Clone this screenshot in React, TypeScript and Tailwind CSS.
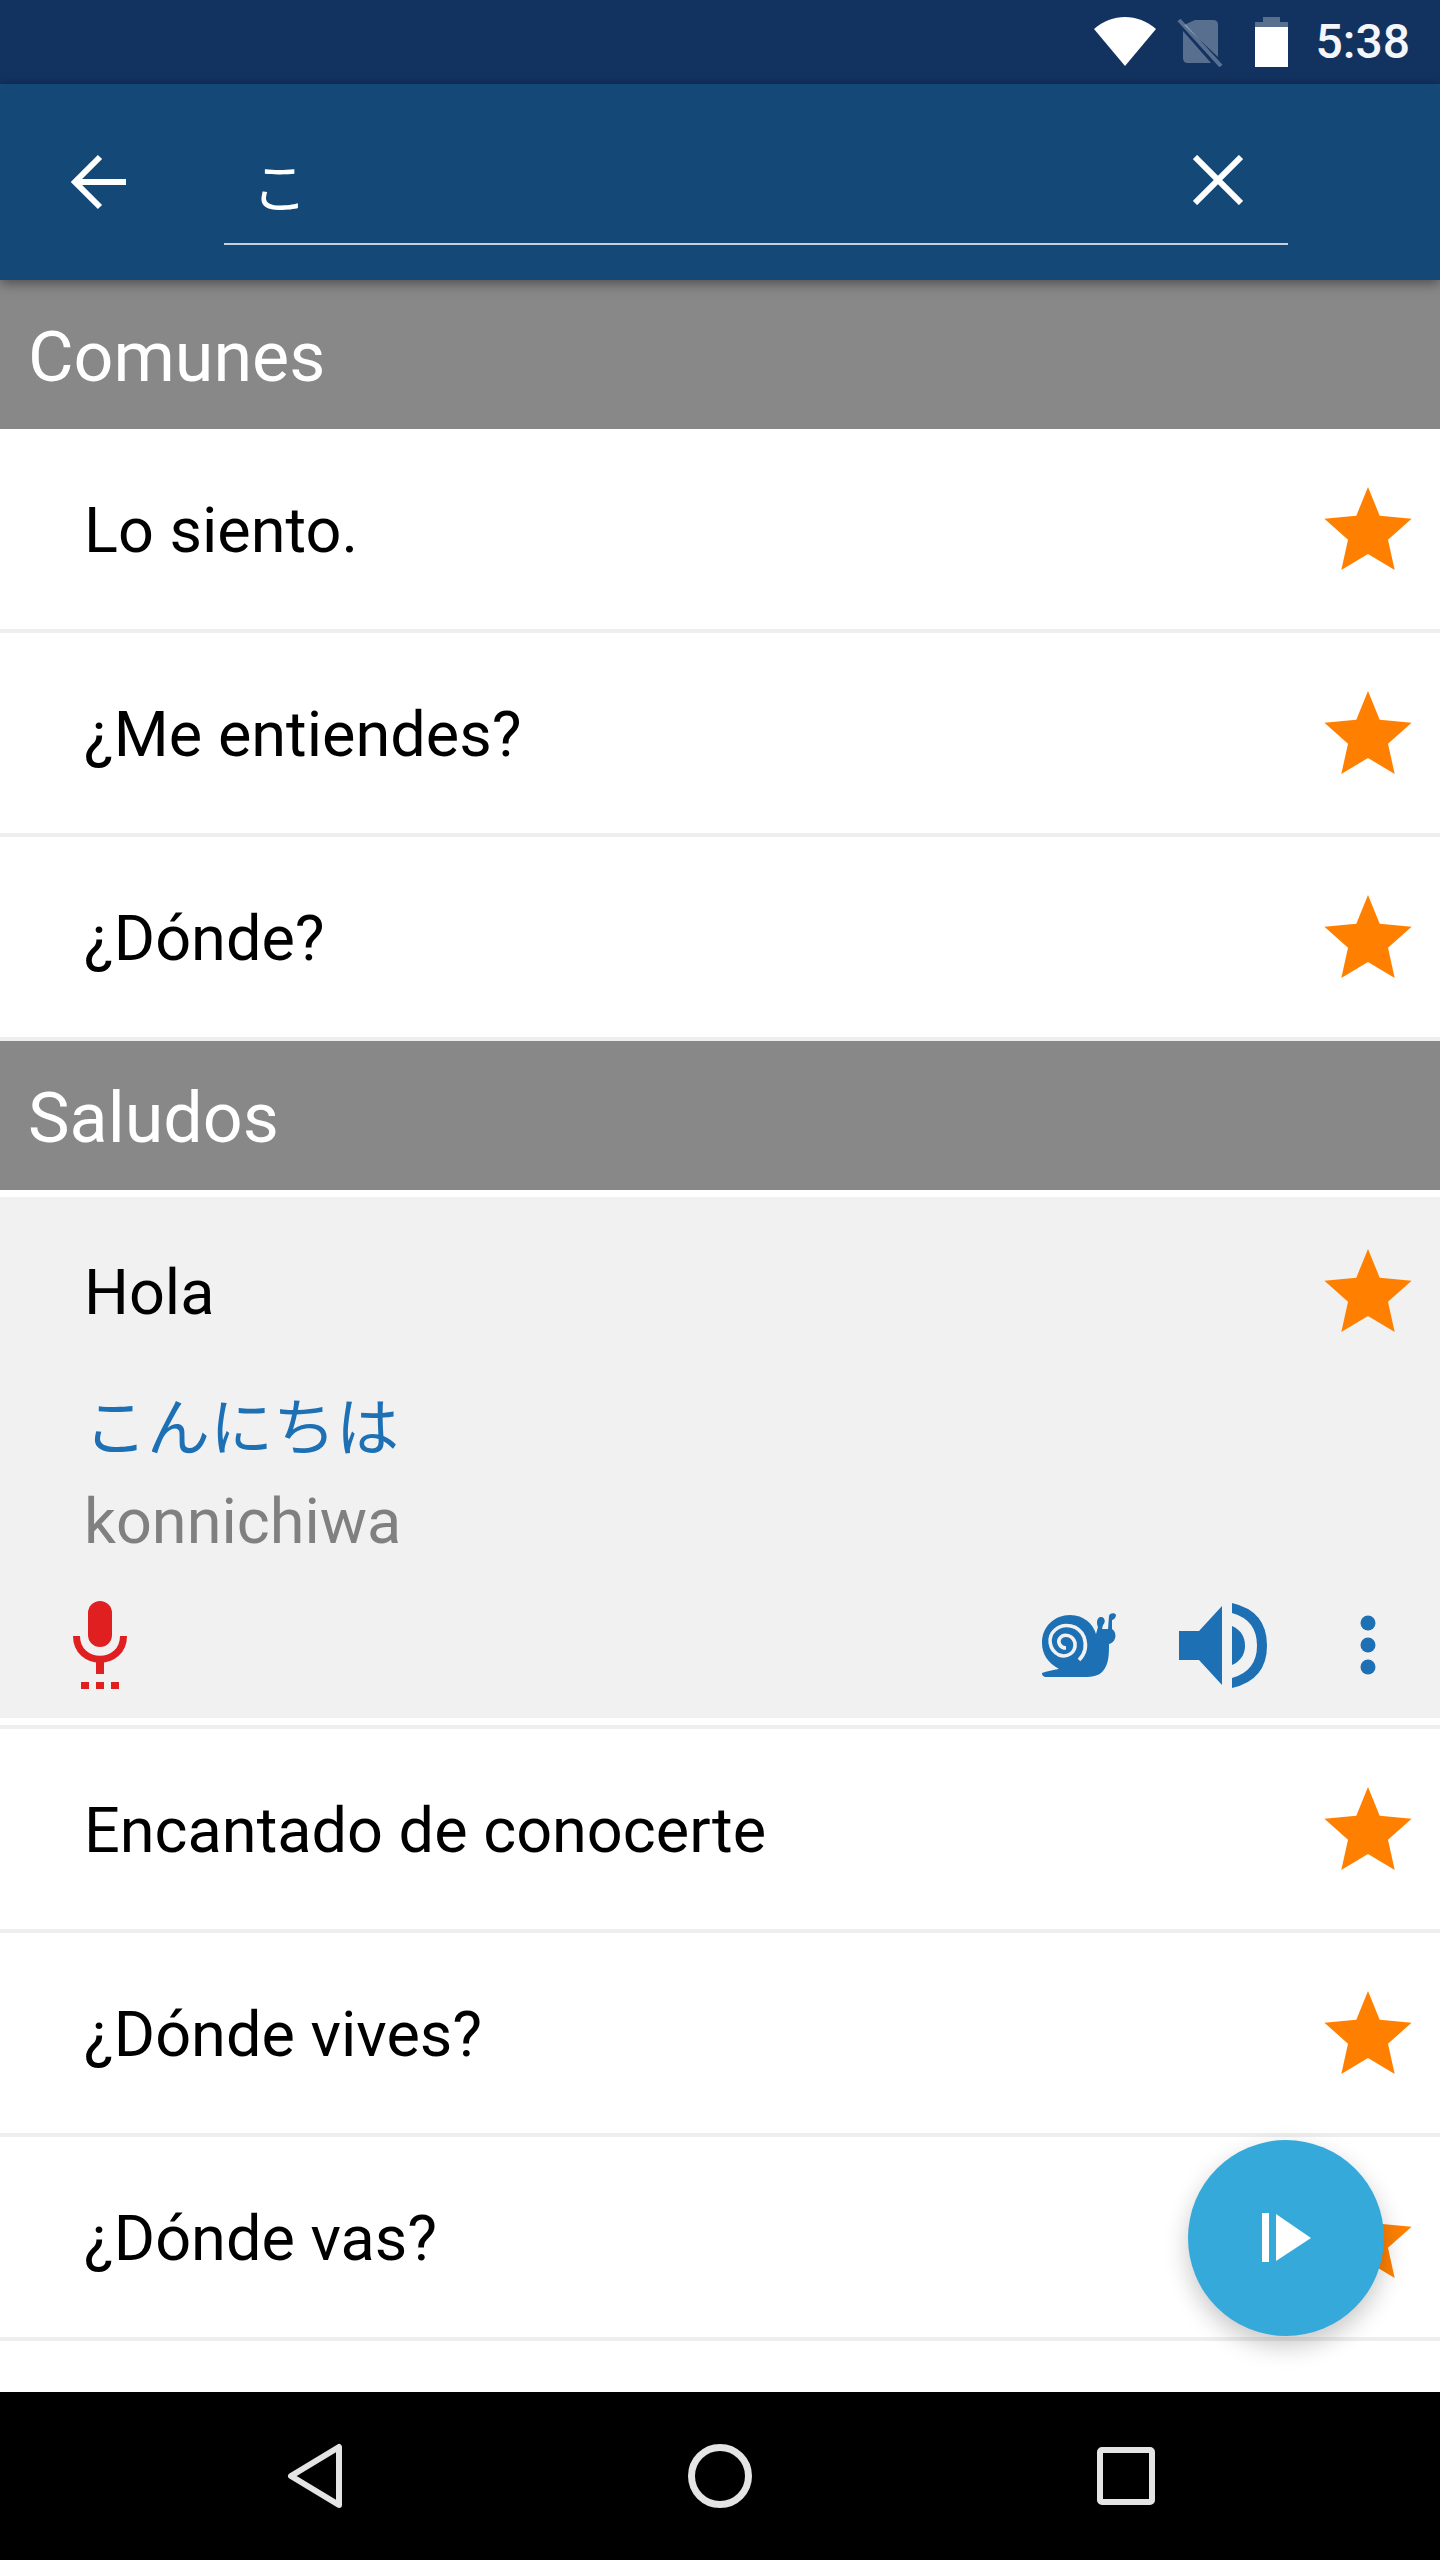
const roboto = { fontFamily: 'Roboto, sans-serif' }
const cjk = { fontFamily: '"Noto Sans CJK JP", sans-serif' }

function Star() {
  return (
    <svg width="88" height="83" viewBox="0 0 88 83" className="mb-[2px] shrink-0">
      <path d="M44 0 L55.7 28.7 L87.6 31.7 L64 52.7 L70.7 83 L44 67 L17.3 83 L24 52.7 L0.4 31.7 L32.3 28.7 Z" fill="#ff8000" />
    </svg>
  )
}

function SectionHeader({ title }: { title: string }) {
  return (
    <div className="flex h-[149px] shrink-0 items-center bg-[#888888] pl-[28px] pt-[6px] text-[70px] text-white">
      <span>{title}</span>
    </div>
  )
}

function Row({ label }: { label: string }) {
  return (
    <div className="flex h-[204px] shrink-0 items-center justify-between border-b-4 border-[#eeeeee] pl-[84px] pr-[28px] text-[63px] text-black">
      <span className="pt-[4px]">{label}</span>
      <Star />
    </div>
  )
}

export default function App() {
  return (
    <div style={roboto} className="relative flex h-[2560px] w-[1440px] flex-col overflow-hidden bg-white">
      <div className="flex h-[84px] shrink-0 items-center justify-end bg-[#123260] pr-[30px]">
        <svg width="62" height="50" viewBox="0 0 62 50" className="mr-[21px]">
          <path d="M0 12 C18 -4 44 -4 62 12 L31 49 Z" fill="#fff" />
        </svg>
        <svg width="46" height="50" viewBox="0 0 46 50" className="mr-[32px]">
          <path d="M18 3 H36 Q41 3 41 8 V40 L7 8 Z M6 14 L34 46 H11 Q6 46 6 41 Z" fill="#fff" fillOpacity="0.3" />
          <path d="M2 3 L44 49" stroke="#fff" strokeOpacity="0.3" strokeWidth="4" />
        </svg>
        <svg width="33" height="50" viewBox="0 0 33 50" className="mr-[28px]">
          <path d="M8 0 H25 V5 H33 V10 H0 V5 H8 Z" fill="#fff" fillOpacity="0.3" />
          <rect x="0" y="10" width="33" height="40" fill="#fff" />
        </svg>
        <span className="text-[48px] font-medium leading-none text-[#f4f6f9]">5:38</span>
      </div>

      <div className="relative z-10 flex h-[196px] shrink-0 bg-[#144877] shadow-[0_3px_12px_rgba(0,0,0,0.45)]">
        <div className="flex w-[224px] items-center pl-[69px]">
          <svg width="58" height="58" viewBox="0 0 58 58">
            <path d="M57 29 H5 M31 4 L6 29 L31 54" fill="none" stroke="#fff" strokeWidth="6" />
          </svg>
        </div>
        <div className="mt-[159px] h-[2px] w-[1064px] bg-[#c5d2de]" />
      </div>
      <span className="absolute left-[252px] top-[154px] z-20 text-[55px] leading-[60px] text-white" style={cjk}>
        こ
      </span>
      <svg width="50" height="50" viewBox="0 0 50 50" className="absolute left-[1193px] top-[155px] z-20">
        <path d="M2 2 L48 48 M48 2 L2 48" stroke="#fff" strokeWidth="6" />
      </svg>

      <SectionHeader title="Comunes" />
      <Row label="Lo siento." />
      <Row label="¿Me entiendes?" />
      <Row label="¿Dónde?" />
      <SectionHeader title="Saludos" />

      <div className="mt-[7px] flex h-[521px] shrink-0 flex-col bg-[#f1f1f2]">
        <div className="flex h-[189px] shrink-0 items-center justify-between pl-[84px] pr-[28px] text-[63px] text-black">
          <span className="pt-[4px]">Hola</span>
          <Star />
        </div>
        <div className="mt-[2px] pl-[84px] text-[63px] leading-[70px] text-[#1c70b3]" style={cjk}>
          こんにちは
        </div>
        <div className="mt-[29px] pl-[84px] text-[63px] leading-[70px] text-[#808080]">konnichiwa</div>
        <div className="flex flex-1 items-center justify-between pl-[73px] pr-[64px] pt-[15px]">
          <svg width="54" height="88" viewBox="0 0 54 88">
            <rect x="15" y="0" width="24" height="46" rx="12" fill="#e02020" />
            <path d="M3.5 35 C3.5 66 50.5 66 50.5 35" fill="none" stroke="#e02020" strokeWidth="7" />
            <rect x="23" y="58" width="8" height="15" fill="#e02020" />
            <path d="M8 81 H16 V88 H8 Z M23 81 H31 V88 H23 Z M38 81 H46 V88 H38 Z" fill="#e02020" />
          </svg>
          <div className="flex items-center">
            <svg width="74" height="66" viewBox="0 0 74 66" className="mr-[63px]">
              <path d="M0 61 C5 59 11 58 17 57 C6 51 0 42 0 31 C0 14 13 3 28 3 C42 3 51 12 54 22 L56 15 C54 11 55 5 59 5 C63 5 64 10 61 13 L60 17 L66 17 L67 4 C67 1 73 0 74 3 C74 6 71 8 70 8 L70 17 C75 20 75 30 67 32 C67 42 67 52 61 59 C56 65 48 65 38 65 L5 65 C1 65 0 63 0 61 Z" fill="#1c70b3" />
              <path d="M24 36 C18 36 15 30 18 26 C22 21 31 23 33 31 C34 41 25 46 17 43 C7 38 5 25 13 18 C22 10 37 13 42 25 C45 34 43 42 37 48" fill="none" stroke="#f1f1f2" strokeWidth="3.6" />
            </svg>
            <svg width="88" height="85" viewBox="0 0 88 85" className="mr-[93px]">
              <path d="M0 28 H20 L43 3 V82 L20 57 H0 Z" fill="#1c70b3" />
              <path d="M53 23 Q66 29 66 42.5 Q66 56 53 62 Z" fill="#1c70b3" />
              <path d="M53 0 Q88 8 88 42.5 Q88 77 53 85 V75 Q78 68 78 42.5 Q78 17 53 10 Z" fill="#1c70b3" />
            </svg>
            <svg width="16" height="60" viewBox="0 0 16 60">
              <circle cx="8" cy="8" r="7.5" fill="#1c70b3" />
              <circle cx="8" cy="30" r="7.5" fill="#1c70b3" />
              <circle cx="8" cy="52" r="7.5" fill="#1c70b3" />
            </svg>
          </div>
        </div>
      </div>

      <div className="mt-[7px] h-[4px] shrink-0 bg-[#eeeeee]" />
      <Row label="Encantado de conocerte" />
      <Row label="¿Dónde vives?" />
      <Row label="¿Dónde vas?" />

      <div className="absolute left-[1188px] top-[2140px] z-20 flex h-[196px] w-[196px] items-center justify-center rounded-full bg-[#36a9db] shadow-[0_10px_24px_rgba(0,0,0,0.22)]">
        <svg width="50" height="50" viewBox="0 0 50 50">
          <rect x="1" y="0" width="7" height="49" fill="#fff" />
          <path d="M15 1 L50 25 L15 48 Z" fill="#fff" />
        </svg>
      </div>

      <div className="absolute bottom-0 left-0 z-30 flex h-[168px] w-[1440px] items-center bg-black">
        <svg width="58" height="66" viewBox="0 0 58 66" className="ml-[286px]">
          <path d="M53 4 V62 L5 33 Z" fill="none" stroke="#e4e4e4" strokeWidth="6" strokeLinejoin="round" />
        </svg>
        <svg width="64" height="64" viewBox="0 0 64 64" className="ml-[344px]">
          <circle cx="32" cy="32" r="28.5" fill="none" stroke="#e4e4e4" strokeWidth="7" />
        </svg>
        <svg width="58" height="58" viewBox="0 0 58 58" className="ml-[345px]">
          <rect x="3" y="3" width="52" height="52" rx="2" fill="none" stroke="#e4e4e4" strokeWidth="6" />
        </svg>
      </div>
    </div>
  )
}
